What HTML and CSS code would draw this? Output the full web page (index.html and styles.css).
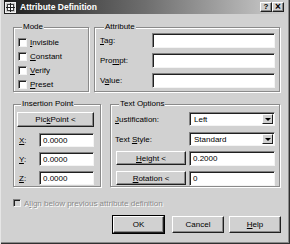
FILE: index.html
```html
<!DOCTYPE html>
<html>
<head>
<meta charset="utf-8">
<link rel="stylesheet" href="styles.css">
</head>
<body>
<div class="window">
  <div class="titlebar">
    <svg class="ticon" width="11" height="11" viewBox="0 0 11 11">
      <rect x="0.5" y="0.5" width="10" height="10" fill="#c8c8c8" stroke="#f0f0f0"/>
      <rect x="2.5" y="2.5" width="6" height="6" fill="#ffffff" stroke="#404040"/>
      <path d="M5.5 1V10M1 5.5H10" stroke="#202020" stroke-width="1"/>
    </svg>
    <span class="title">Attribute Definition</span>
    <div class="tbtns">
      <span class="tbtn">?</span>
      <span class="tbtn close">×</span>
    </div>
  </div>
  <div class="content">
    <div class="row row1">
      <div class="group mode">
        <span class="legend">Mode</span>
        <div class="checks">
          <div class="chk"><span class="box"></span><span><u>I</u>nvisible</span></div>
          <div class="chk"><span class="box"></span><span><u>C</u>onstant</span></div>
          <div class="chk"><span class="box"></span><span><u>V</u>erify</span></div>
          <div class="chk"><span class="box"></span><span><u>P</u>reset</span></div>
        </div>
      </div>
      <div class="group attr">
        <span class="legend">Attribute</span>
        <div class="fields">
          <div class="field"><span class="lbl"><u>T</u>ag:</span><span class="input wide"></span></div>
          <div class="field"><span class="lbl">Pro<u>m</u>pt:</span><span class="input wide"></span></div>
          <div class="field"><span class="lbl">V<u>a</u>lue:</span><span class="input wide"></span></div>
        </div>
      </div>
    </div>
    <div class="row row2">
      <div class="group ins">
        <span class="legend">Insertion Point</span>
        <div class="btn pick">Pic<u>k</u> Point &lt;</div>
        <div class="coords">
          <div class="coord"><span class="clbl"><u>X</u>:</span><span class="input small">0.0000</span></div>
          <div class="coord"><span class="clbl"><u>Y</u>:</span><span class="input small">0.0000</span></div>
          <div class="coord"><span class="clbl"><u>Z</u>:</span><span class="input small">0.0000</span></div>
        </div>
      </div>
      <div class="group topt">
        <span class="legend">Text Options</span>
        <div class="trow r1"><span class="tlbl"><u>J</u>ustification:</span><span class="select"><span class="val">Left</span><span class="arrow"></span></span></div>
        <div class="trow r2"><span class="tlbl">Text <u>S</u>tyle:</span><span class="select"><span class="val">Standard</span><span class="arrow"></span></span></div>
        <div class="trow r3"><span class="btn tbtn2"><u>H</u>eight &lt;</span><span class="input mid">0.2000</span></div>
        <div class="trow r4"><span class="btn tbtn2"><u>R</u>otation &lt;</span><span class="input mid">0</span></div>
      </div>
    </div>
    <div class="align">
      <span class="box dis"></span><span class="distext">A<u>l</u>ign below previous attribute definition</span>
    </div>
    <div class="buttons">
      <span class="btn dlg ok">OK</span>
      <span class="btn dlg cancel">Cancel</span>
      <span class="btn dlg help"><u>H</u>elp</span>
    </div>
  </div>
</div>
</body>
</html>
```

FILE: styles.css
```css
* { box-sizing: border-box; }
html, body { margin: 0; padding: 0; background: #d1d1d1; }
body { font-family: "Liberation Sans", Arial, sans-serif; font-size: 8px; color: #000; }
u { text-decoration: underline; text-underline-offset: 1px; }

.window {
  width: 290px;
  height: 244px;
  background: #d1d1d1;
  padding: 0 2px 2px 2px;
  border-left: 1px solid #e6e6e6;
  box-shadow: inset -1px -1px 0 #303030, inset -2px -2px 0 #8a8a8a;
  display: flex;
  flex-direction: column;
}

.titlebar {
  height: 14px;
  margin-left: 1px;
  margin-right: 1px;
  background: linear-gradient(to right, #1e1e1e, #6e6e6e 50%, #cfcfcf);
  display: flex;
  align-items: center;
  padding: 0 3px 0 1px;
}
.ticon { flex: none; }
.title {
  margin-left: 4px;
  color: #fff;
  font-weight: bold;
  font-size: 8.5px;
  flex: 1;
}
.tbtns { display: flex; }
.tbtn {
  width: 12px;
  height: 10px;
  background: #d1d1d1;
  border: 1px solid;
  border-color: #fff #202020 #202020 #fff;
  box-shadow: inset -1px -1px 0 #888;
  font-weight: bold;
  font-size: 8px;
  line-height: 8px;
  text-align: center;
}
.tbtn.close { font-size: 10px; line-height: 7px; }

.content {
  padding: 13px 0 0 10px;
  display: flex;
  flex-direction: column;
}

.row { display: flex; }
.row1 { gap: 5px; }
.row2 { gap: 9px; margin-top: 12px; }

.group {
  border: 1px solid #8a8a8a;
  box-shadow: inset 1px 1px 0 #fff, 1px 1px 0 #fff;
  display: flex;
  flex-direction: column;
}
.legend {
  display: block;
  width: max-content;
  height: 10px;
  line-height: 10px;
  margin: -6px 0 0 4px;
  padding: 0 1px;
  background: #d1d1d1;
}

.mode { width: 76px; height: 65px; padding-left: 4px; }
.attr { width: 186px; height: 65px; padding-left: 5px; }

.checks { margin-top: 3px; display: flex; flex-direction: column; }
.chk { height: 14px; display: flex; align-items: center; gap: 3px; }
.box {
  width: 9px;
  height: 9px;
  background: #fff;
  border: 1px solid;
  border-color: #808080 #f4f4f4 #f4f4f4 #808080;
  box-shadow: inset 1px 1px 0 #202020;
  flex: none;
}

.fields { margin-top: 1px; display: flex; flex-direction: column; gap: 5px; }
.field { display: flex; align-items: center; height: 15px; }
.lbl { width: 52px; }

.input {
  background: #fff;
  border: 1px solid;
  border-color: #808080 #f4f4f4 #f4f4f4 #808080;
  box-shadow: inset 1px 1px 0 #202020;
  padding-left: 3px;
  display: flex;
  align-items: center;
}
.input.wide { width: 123px; height: 15px; }

.ins { width: 88px; height: 83px; padding-left: 3px; }
.topt { width: 170px; height: 83px; padding-left: 4px; }

.btn {
  background: #d1d1d1;
  border: 1px solid;
  border-color: #fff #202020 #202020 #fff;
  box-shadow: inset -1px -1px 0 #8a8a8a;
  display: flex;
  align-items: center;
  justify-content: center;
}
.pick { margin-top: 3px; width: 77px; height: 15px; }

.coords { margin-top: 6px; display: flex; flex-direction: column; gap: 5px; }
.coord { display: flex; align-items: center; height: 14px; }
.clbl { width: 22px; padding-left: 2px; }
.input.small { width: 55px; height: 14px; }

.trow { display: flex; align-items: center; height: 14px; }
.r1 { margin-top: 3px; }
.r2 { margin-top: 6px; }
.r3 { margin-top: 5px; }
.r4 { margin-top: 6px; }
.tlbl { width: 74px; }
.select {
  width: 86px;
  height: 14px;
  background: #fff;
  border: 1px solid;
  border-color: #808080 #f4f4f4 #f4f4f4 #808080;
  box-shadow: inset 1px 1px 0 #202020;
  display: flex;
  align-items: center;
  padding: 1px 1px 1px 4px;
}
.select .val { flex: 1; }
.arrow {
  width: 11px;
  height: 10px;
  background: #d1d1d1;
  border: 1px solid;
  border-color: #fff #202020 #202020 #fff;
  display: flex;
  align-items: center;
  justify-content: center;
}
.arrow::after {
  content: "";
  border-left: 3px solid transparent;
  border-right: 3px solid transparent;
  border-top: 3px solid #000;
}
.tbtn2 { width: 70px; height: 14px; margin-left: 1px; margin-right: 3px; }
.input.mid { width: 86px; height: 15px; }

.align {
  margin-top: 9px;
  height: 14px;
  display: flex;
  align-items: center;
  gap: 3px;
}
.box.dis { background: #d1d1d1; width: 8px; height: 8px; }
.distext { color: #8a8a8a; text-shadow: 1px 1px 0 #fff; }

.buttons {
  margin-top: 6px;
  display: flex;
  padding-left: 100px;
}
.dlg { height: 17px; }
.ok { width: 51px; outline: 1px solid #000; }
.cancel { width: 52px; margin-left: 8px; }
.help { width: 52px; margin-left: 5px; }
```
